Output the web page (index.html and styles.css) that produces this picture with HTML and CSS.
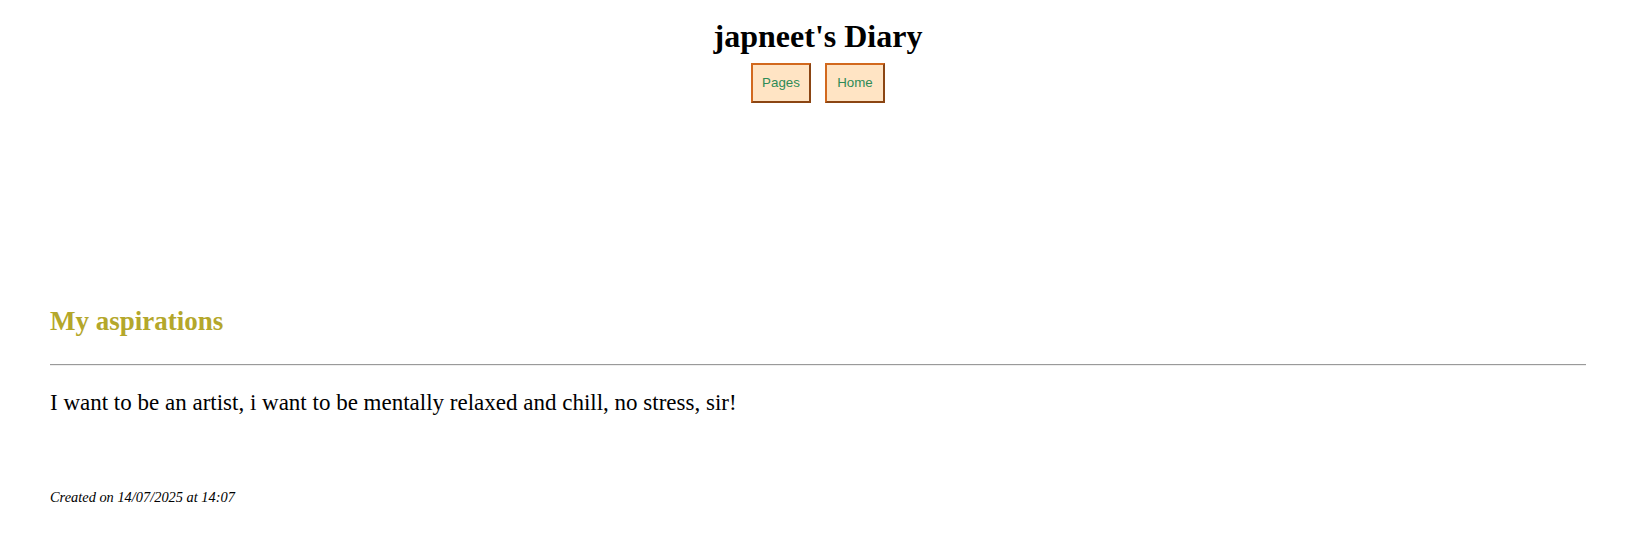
FILE: index.html
```html
<!DOCTYPE html>
<html lang="en">
<head>
<meta charset="utf-8">
<title>japneet's Diary</title>
<link rel="stylesheet" href="styles.css">
</head>
<body>
<div class="page">
  <header class="site-header">
    <h1 class="site-title">japneet's Diary</h1>
    <nav class="nav">
      <button class="nav-btn">Pages</button>
      <button class="nav-btn">Home</button>
    </nav>
  </header>
  <article class="entry">
    <h2 class="entry-title">My aspirations</h2>
    <hr class="entry-rule">
    <p class="entry-body">I want to be an artist, i want to be mentally relaxed and chill, no stress, sir!</p>
    <p class="entry-meta">Created on 14/07/2025 at 14:07</p>
  </article>
</div>
</body>
</html>
```

FILE: styles.css
```css
html, body {
  margin: 0;
  padding: 0;
  background: #ffffff;
}

body {
  font-family: "Liberation Serif", "Times New Roman", serif;
  color: #000000;
}

.page {
  padding: 0 63px 0 50px;
}

.site-header {
  display: flex;
  flex-direction: column;
  align-items: center;
}

.site-title {
  margin: 18px 0 0;
  font-size: 32px;
  font-weight: bold;
  line-height: normal;
}

.nav {
  display: flex;
  gap: 14px;
  margin-top: 8px;
}

.nav-btn {
  box-sizing: border-box;
  width: 60px;
  height: 40px;
  padding: 0 0 1px;
  font-family: "Liberation Sans", Arial, sans-serif;
  font-size: 13.333px;
  color: #2e8b57;
  background: #ffe4c4;
  border: 2px solid;
  border-color: #d2691e #8b4513 #8b4513 #d2691e;
  cursor: pointer;
}

.entry {
  margin-top: 203px;
}

.entry-title {
  margin: 0;
  font-size: 27px;
  font-weight: bold;
  line-height: normal;
  color: #b4a72b;
}

.entry-rule {
  margin: 27px 0 0;
  border: 0;
  border-top: 1px solid #9a9a9a;
  border-bottom: 1px solid #eeeeee;
  height: 0;
}

.entry-body {
  margin: 24px 0 0;
  font-size: 23px;
  line-height: normal;
}

.entry-meta {
  margin: 73px 0 0;
  font-size: 14.4px;
  font-style: italic;
  line-height: normal;
}
```
